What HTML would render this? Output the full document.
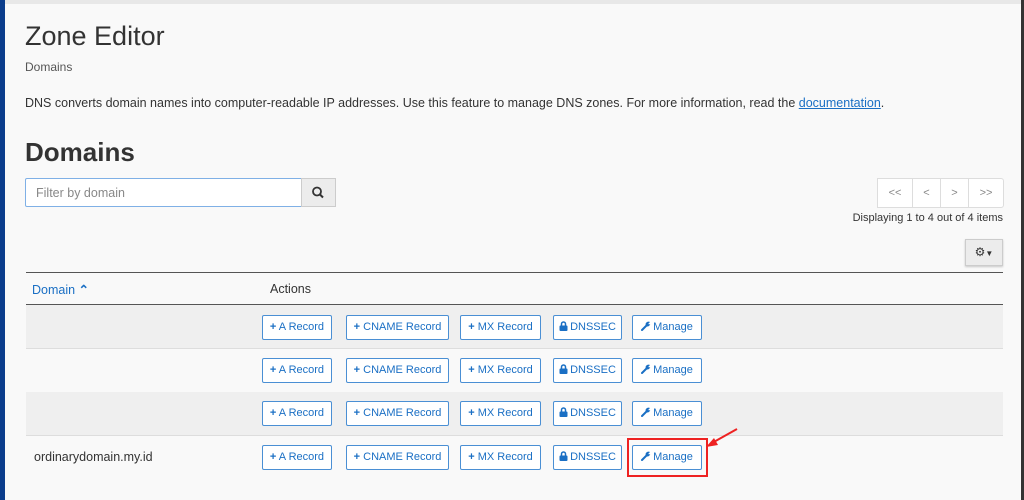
<!DOCTYPE html>
<html><head><style>
body{margin:0;width:1024px;height:500px;background:#f9f9f9;font-family:"Liberation Sans",sans-serif;position:relative;overflow:hidden;color:#333}
.l{position:absolute;left:0;top:0;width:5px;height:500px;background:#0b3d8c}
.r{position:absolute;right:0;top:0;width:3px;height:500px;background:#333}
.t{position:absolute;left:5px;right:3px;top:0;height:4px;background:#e8e8e8}
.a{position:absolute;white-space:nowrap}
.btn{position:absolute;height:23px;border:1px solid #4a8fd4;border-radius:2px;background:#fff;color:#1a6fc4;font-size:11px;line-height:23px;text-align:center;box-sizing:content-box}
.btn svg{vertical-align:-1px;margin-right:2px}
.row{position:absolute;left:26px;width:977px;height:43px;border-bottom:1px solid #ddd}
.pg{position:absolute;top:178px;height:28px;border:1px solid #ddd;background:#fff;color:#888;font-size:11px;line-height:28px;text-align:center}
</style></head><body>
<div class="l"></div><div class="r"></div><div class="t"></div>
<div class="a" style="left:25px;top:21px;font-size:27px;color:#333;font-weight:300">Zone Editor</div>
<div class="a" style="left:25px;top:60px;font-size:12px;color:#555">Domains</div>
<div class="a" style="left:25px;top:96px;font-size:12.5px">DNS converts domain names into computer-readable IP addresses. Use this feature to manage DNS zones. For more information, read the <span style="color:#1a6fc4;text-decoration:underline">documentation</span>.</div>
<div class="a" style="left:25px;top:137px;font-size:26px;font-weight:bold;color:#333">Domains</div>
<div class="a" style="left:25px;top:178px;width:275px;height:27px;border:1px solid #7fb0e6;background:#fff;border-radius:2px 0 0 2px"><span style="position:absolute;left:10px;top:7px;font-size:12.5px;color:#888">Filter by domain</span></div>
<div class="a" style="left:301px;top:178px;width:33px;height:27px;border:1px solid #ccc;background:#ececec"><svg width="33" height="27"><circle cx="15" cy="12.5" r="4" fill="none" stroke="#333" stroke-width="1.8"/><line x1="18" y1="15.5" x2="21" y2="18.5" stroke="#333" stroke-width="2"/></svg></div>
<div class="pg" style="left:877px;width:34px">&lt;&lt;</div>
<div class="pg" style="left:912px;width:27px">&lt;</div>
<div class="pg" style="left:940px;width:27px">&gt;</div>
<div class="pg" style="left:968px;width:34px;border-radius:0 3px 3px 0">&gt;&gt;</div>
<div class="a" style="right:21px;top:212px;font-size:11px">Displaying 1 to 4 out of 4 items</div>
<div class="a" style="left:965px;top:239px;width:36px;height:25px;border:1px solid #ccc;background:#ececec;box-shadow:0 1px 2px rgba(0,0,0,.2);font-size:12px;line-height:25px;text-align:center">&#9881;<span style="font-size:8px">&#9660;</span></div>
<div class="a" style="left:26px;top:272px;width:977px;height:1px;background:#555"></div>
<div class="a" style="left:32px;top:282px;font-size:12.5px;color:#1a6fc4">Domain <b>&#8963;</b></div>
<div class="a" style="left:270px;top:282px;font-size:12.5px">Actions</div>
<div class="a" style="left:26px;top:304px;width:977px;height:1px;background:#555"></div>
<div class="row" style="top:305px;background:#efefef"></div>
<div class="row" style="top:349px;background:#f9f9f9"></div>
<div class="row" style="top:392px;background:#efefef"></div>
<div class="row" style="top:436px;background:#f9f9f9;border-bottom:none"></div>
<div class="a" style="left:34px;top:450px;font-size:12.5px">ordinarydomain.my.id</div>
<div id="btns"></div>
<script>
var lock='<svg width="9" height="10"><path d="M2.5 4.5V3a2 2 0 0 1 4 0v1.5" fill="none" stroke="#1a6fc4" stroke-width="1.5"/><rect x="0.5" y="4.5" width="8" height="5.5" rx="1" fill="#1a6fc4"/></svg>';
var wr='<svg width="10" height="10"><path d="M1 9L5.5 4.5" stroke="#1a6fc4" stroke-width="2" stroke-linecap="round"/><path d="M4.5 3.5A3 3 0 0 1 9 1L7.3 2.7 7.3 2.7 8 3.5 9.2 3 A3 3 0 0 1 6 5.5Z" fill="#1a6fc4"/></svg>';
var ys=[315,358,401,445],h='';
ys.forEach(function(y){
h+='<div class="btn" style="left:262px;top:'+y+'px;width:68px"><b>+</b> A Record</div>';
h+='<div class="btn" style="left:346px;top:'+y+'px;width:101px"><b>+</b> CNAME Record</div>';
h+='<div class="btn" style="left:460px;top:'+y+'px;width:79px"><b>+</b> MX Record</div>';
h+='<div class="btn" style="left:553px;top:'+y+'px;width:67px">'+lock+'DNSSEC</div>';
h+='<div class="btn" style="left:632px;top:'+y+'px;width:68px">'+wr+'Manage</div>';
});
document.getElementById('btns').innerHTML=h;
</script>
<div class="a" style="left:627px;top:438px;width:77px;height:35px;border:2px solid #e22"></div>
<svg class="a" style="left:700px;top:425px" width="45" height="30"><line x1="37" y1="4" x2="12" y2="18" stroke="#e22" stroke-width="2"/><polygon points="6,22 14,13 18,20" fill="#e22"/></svg>
</body></html>
